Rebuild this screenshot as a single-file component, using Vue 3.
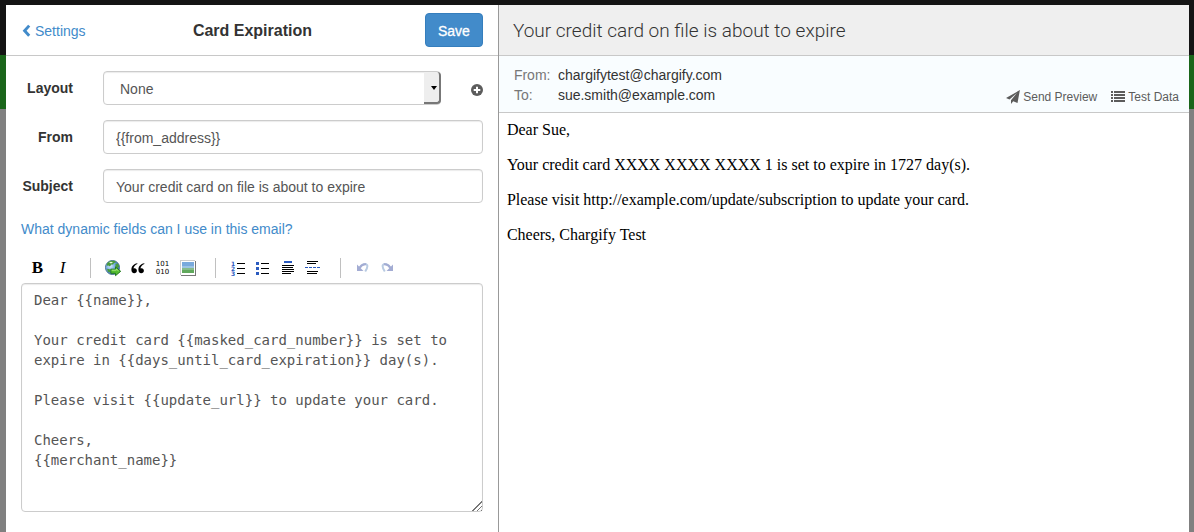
<script setup>
import { ref } from 'vue'

const layout = ref('None')
const fromAddress = ref('{{from_address}}')
const subject = ref('Your credit card on file is about to expire')
const body = ref(`Dear {{name}},

Your credit card {{masked_card_number}} is set to expire in {{days_until_card_expiration}} day(s).

Please visit {{update_url}} to update your card.

Cheers,
{{merchant_name}}`)

const paragraphs = [
  'Dear Sue,',
  'Your credit card XXXX XXXX XXXX 1 is set to expire in 1727 day(s).',
  'Please visit http://example.com/update/subscription to update your card.',
  'Cheers, Chargify Test',
]
</script>

<template>
  <div class="page">
    <div class="backdrop">
      <div class="band-dark"></div>
      <div class="band-green"></div>
    </div>

    <main class="dialog">
      <section class="editor">
        <header class="editor-head">
          <a href="#" class="back">
            <svg width="9" height="14" viewBox="0 0 9 14" aria-hidden="true">
              <path d="M7.200 1.600 2.600 6.700l4.600 5.100" fill="none" stroke="currentColor" stroke-width="2.900" />
            </svg>
            <span>Settings</span>
          </a>
          <h1>Card Expiration</h1>
          <button type="button" class="save">Save</button>
        </header>

        <form class="form" @submit.prevent>
          <div class="row">
            <label for="layout">Layout</label>
            <div class="layout-field">
              <div class="select-wrap">
                <select id="layout" v-model="layout" class="field">
                  <option>None</option>
                </select>
              </div>
              <button type="button" class="add" aria-label="Add layout">
                <svg width="12" height="12" viewBox="0 0 12 12">
                  <circle cx="6" cy="6" r="6" fill="#5c5c5c" />
                  <path d="M6 2.700v6.600M2.700 6h6.600" stroke="#fff" stroke-width="2" />
                </svg>
              </button>
            </div>
          </div>
          <div class="row">
            <label for="from">From</label>
            <input id="from" v-model="fromAddress" type="text" class="field" />
          </div>
          <div class="row">
            <label for="subject">Subject</label>
            <input id="subject" v-model="subject" type="text" class="field" />
          </div>

          <a href="#" class="help">What dynamic fields can I use in this email?</a>

          <div class="toolbar" role="toolbar" aria-label="Formatting">
            <button type="button" class="tool bold">B</button>
            <button type="button" class="tool italic">I</button>
            <span class="sep"></span>
            <button type="button" class="tool" aria-label="Link">
              <svg width="18" height="18" viewBox="0 0 18 18">
                <defs>
                  <radialGradient id="sea" cx="0.35" cy="0.4" r="0.7">
                    <stop offset="0" stop-color="#d6ebfc" />
                    <stop offset="0.5" stop-color="#6ba4de" />
                    <stop offset="1" stop-color="#2b5fae" />
                  </radialGradient>
                </defs>
                <circle cx="8.500" cy="8.500" r="7" fill="url(#sea)" stroke="#4b7693" stroke-width="1" />
                <path d="M4 3.500 7 1.800l4 .2 1 1.600-2 .3-.8 1.500-2 .2L6 7.400 4.500 6.500 3 6.700 2.800 5zM11.500 5l2.500-.5 1.200 3-1.500 1.500-2.200-1zM3 9.800l2.700.5.8 1.500-1 1.800-1.700-1z" fill="#499b3a" />
                <path d="m5 3.500 2-.8 2 .5-2 1.300z" fill="#e8f6df" />
                <path d="M6.800 10.200h4.700V7.900l5.200 4.400-5.200 4.400v-2.400H6.800z" fill="#55bd30" stroke="#237a20" stroke-width="1" />
                <path d="M7.700 11.200h4.600V10l2.300 2" fill="none" stroke="#a7e67b" />
              </svg>
            </button>
            <button type="button" class="tool" aria-label="Blockquote">
              <svg width="14" height="11" viewBox="0 0 14 11">
                <path d="M6.300.3C2.700 1 .4 3.300.4 6.700c0 2.200 1.100 3.500 2.800 3.500 1.600 0 2.700-1 2.700-2.500S4.900 5.200 3.500 5.200c-.4 0-.7.1-1 .2.100-1.900 1.500-3.500 3.900-4.500z" />
                <path d="M13.300.3C9.700 1 7.400 3.300 7.400 6.700c0 2.200 1.100 3.500 2.800 3.500 1.600 0 2.700-1 2.700-2.500s-1-2.500-2.400-2.500c-.4 0-.7.1-1 .2.100-1.900 1.500-3.500 3.900-4.500z" />
              </svg>
            </button>
            <button type="button" class="tool code">101<br />010</button>
            <button type="button" class="tool" aria-label="Image">
              <svg width="16" height="16" viewBox="0 0 16 16" shape-rendering="crispEdges">
                <path d="M1 15.500h14.500V1" fill="none" stroke="#777" />
                <path d="M.5 15V.5H15" fill="none" stroke="#ccc" />
                <path d="M1 1h14v14H1z" fill="#fff" />
                <path d="M2 2h12v7H2z" fill="#79a9dc" />
                <path d="M2 6h12v2H2z" fill="#9bc3e3" />
                <path d="M2 8h12v5H2z" fill="#60a85c" />
                <path d="M2 8h12v2H2z" fill="#86bb8a" />
              </svg>
            </button>
            <span class="sep"></span>
            <button type="button" class="tool" aria-label="Numbered list">
              <svg width="14" height="15" viewBox="0 0 14 15">
                <g class="digits">
                  <text x="0" y="5">1</text>
                  <text x="0" y="10">2</text>
                  <text x="0" y="15">3</text>
                </g>
                <path d="M6 2.500h8M6 7.500h8M6 12.500h8" stroke="#000" />
              </svg>
            </button>
            <button type="button" class="tool" aria-label="Bulleted list">
              <svg width="14" height="15" viewBox="0 0 14 15">
                <path d="M0 1h3v3H0zM0 6h3v3H0zM0 11h3v3H0z" fill="#2b5bbf" />
                <path d="M5 2.500h8M5 7.500h8M5 12.500h8" stroke="#000" />
              </svg>
            </button>
            <button type="button" class="tool" aria-label="Heading">
              <svg width="12" height="15" viewBox="0 0 12 15">
                <path d="M2 1h8" stroke="#2b5bbf" stroke-width="2" />
                <path d="M0 4.500h12M0 6.500h11M0 8.500h12M0 10.500h12M0 12.500h9" stroke="#000" />
              </svg>
            </button>
            <button type="button" class="tool" aria-label="Horizontal rule">
              <svg width="16" height="15" viewBox="0 0 16 15">
                <path d="M2 .5h11M2 2.500h9M2 10.500h11M2 12.500h10" stroke="#000" />
                <path d="M0 6.500h16" stroke="#2b5bbf" stroke-dasharray="3 1" />
              </svg>
            </button>
            <span class="sep"></span>
            <button type="button" class="tool" aria-label="Undo" disabled>
              <svg width="13" height="12" viewBox="0 0 13 12">
                <path d="M3.500 6C5.500 2 10 .8 11.200 3.200c.7 1.800-.5 4-2 6.300" fill="none" stroke="#b9cbe2" stroke-width="2" />
                <path d="M3.500 6C5.500 3 8 2 10 2.300" fill="none" stroke="#a3acd3" stroke-width="2" />
                <path d="M1 2.500v6.500h6.500z" fill="#a3acd3" />
              </svg>
            </button>
            <button type="button" class="tool" aria-label="Redo" disabled>
              <svg width="13" height="12" viewBox="0 0 13 12">
                <path d="M9.500 6C7.500 2 3 .8 1.800 3.200c-.7 1.800.5 4 2 6.300" fill="none" stroke="#b9cbe2" stroke-width="2" />
                <path d="M9.500 6C7.500 3 5 2 3 2.300" fill="none" stroke="#a3acd3" stroke-width="2" />
                <path d="M12 2.500v6.500H5.500z" fill="#a3acd3" />
              </svg>
            </button>
          </div>

          <textarea v-model="body" class="field body" rows="10" aria-label="Email body" spellcheck="false"></textarea>
        </form>
      </section>

      <section class="preview">
        <h2>{{ subject }}</h2>
        <div class="meta">
          <dl>
            <dt>From:</dt>
            <dd>chargifytest@chargify.com</dd>
            <dt>To:</dt>
            <dd>sue.smith@example.com</dd>
          </dl>
          <div class="actions">
            <a href="#">
              <svg width="14" height="14" viewBox="0 0 14 14" aria-hidden="true">
                <path d="M13.900.1 0 8.100l3.500 1.400 7.400-6.600L5 10.300V14l2.200-2.700 4.300 1.700z" fill="currentColor" />
              </svg>
              <span>Send Preview</span>
            </a>
            <a href="#">
              <svg width="14" height="14" viewBox="0 0 14 14" aria-hidden="true">
                <path d="M0 2h2M3 2h11M0 5h2M3 5h11M0 8h2M3 8h11M0 11h2M3 11h11" stroke="currentColor" stroke-width="2" />
              </svg>
              <span>Test Data</span>
            </a>
          </div>
        </div>
        <article class="message">
          <p v-for="text in paragraphs" :key="text">{{ text }}</p>
        </article>
      </section>
    </main>
  </div>
</template>

<style>
body {
  margin: 0;
  background: #808080;
}
</style>

<style scoped>
* {
  box-sizing: border-box;
}
.page {
  position: relative;
  display: flex;
  min-height: 100vh;
  padding: 5px 5px 0 6px;
  font: 14px/20px "Liberation Sans", Arial, sans-serif;
  color: #333;
}
.backdrop {
  position: absolute;
  inset: 0;
  background: #808080;
}
.band-dark {
  height: 55px;
  background: #141414;
}
.band-green {
  height: 54px;
  background: #1a651a;
}
.dialog {
  position: relative;
  flex: 1;
  display: grid;
  grid-template-columns: minmax(0, 5fr) minmax(0, 7fr);
  background: #fff;
}
.editor {
  border-right: 1px solid #999;
}
a {
  color: #428bca;
  text-decoration: none;
}
button {
  font: inherit;
  cursor: pointer;
}
.editor-head {
  display: grid;
  grid-template-columns: 1fr auto 1fr;
  align-items: center;
  height: 51px;
  padding: 0 15px 0 16px;
  border-bottom: 1px solid #c8c8c8;
}
.back {
  display: flex;
  align-items: center;
  gap: 4px;
  padding-top: 2px;
}
h1 {
  margin: 0;
  padding-top: 2px;
  font-size: 16px;
  line-height: 20px;
}
.save {
  justify-self: end;
  height: 34px;
  padding: 2px 12px 0;
  border: 1px solid #357ebd;
  border-radius: 4px;
  background: #428bca;
  color: #fff;
  -webkit-text-stroke: 0.3px #fff;
}
.form {
  padding: 15px 15px 20px;
}
.row {
  display: grid;
  grid-template-columns: 52px 1fr;
  column-gap: 30px;
  margin-bottom: 15px;
}
.row label {
  padding-top: 7px;
  text-align: right;
  font-weight: bold;
}
.field {
  display: block;
  width: 100%;
  height: 34px;
  margin: 0;
  padding: 2px 12px 0;
  border: 1px solid #ccc;
  border-radius: 4px;
  background: #fff;
  box-shadow: inset 0 1px 1px rgba(0, 0, 0, 0.08);
  color: #555;
  font: inherit;
}
.layout-field {
  display: flex;
  align-items: center;
  justify-content: space-between;
}
.select-wrap {
  position: relative;
  width: 89%;
}
.select-wrap .field {
  appearance: none;
  padding: 2px 16px 0;
}
.select-wrap::before {
  content: "";
  position: absolute;
  top: 1px;
  right: 0;
  bottom: 1px;
  width: 15px;
  border: solid #777;
  border-width: 0 2px 2px 0;
  border-radius: 0 4px 4px 0;
  background: #eee;
  pointer-events: none;
}
.select-wrap::after {
  content: "";
  position: absolute;
  top: 15px;
  right: 4px;
  border: 3px solid transparent;
  border-top: 4px solid #000;
  border-bottom: 0;
  pointer-events: none;
}
.add {
  display: flex;
  padding: 4px 0 0;
  border: 0;
  background: none;
}
.help {
  display: block;
  margin-top: 16px;
}
.toolbar {
  display: flex;
  height: 30px;
  margin: 14px 4px 0;
}
.tool {
  display: flex;
  align-items: center;
  justify-content: center;
  width: 25px;
  height: 30px;
  padding: 0;
  border: 0;
  background: none;
  color: #000;
}
.bold,
.italic {
  font: bold 17px/20px "Liberation Serif", "Times New Roman", serif;
}
.italic {
  font-style: italic;
  font-weight: normal;
}
.code {
  font: 7px/8px "DejaVu Sans", sans-serif;
}
.digits {
  font: bold 6px "DejaVu Sans", sans-serif;
  fill: #2b5bbf;
}
.sep {
  width: 25px;
  height: 20px;
  margin: 5px 0;
  background: linear-gradient(#c0c0c0, #c0c0c0) 15px 0 / 1px 100% no-repeat;
}
.body {
  height: auto;
  min-height: 229px;
  padding: 6px 12px;
  font: 14px/20px "DejaVu Sans Mono", monospace;
  resize: vertical;
}
.body::-webkit-resizer {
  background:
    linear-gradient(135deg, #fff 54%, transparent 54%),
    repeating-linear-gradient(135deg, transparent 0 2px, #777 2px 3px);
}
h2 {
  height: 51px;
  margin: 0;
  padding: 0 14px;
  border-bottom: 1px solid #c8c8c8;
  background: #efefef;
  font: 300 19px/52px Roboto, "Liberation Sans", sans-serif;
}
.meta {
  display: flex;
  justify-content: space-between;
  align-items: flex-end;
  padding: 9px 10px 5px 15px;
  border-bottom: 1px solid #c8c8c8;
  background: #f9fdff;
}
dl {
  display: grid;
  grid-template-columns: 44px auto;
  margin: 0 0 2px;
}
dt {
  color: #777;
}
dd {
  margin: 0;
}
.actions {
  display: flex;
  gap: 14px;
  font-size: 12px;
}
.actions a {
  display: flex;
  align-items: center;
  gap: 3px;
  color: #5c5c5c;
}
.message {
  padding: 7px 8px;
  color: #000;
  font: 16px/19px "Liberation Serif", "Times New Roman", serif;
}
.message p {
  margin: 0 0 16px;
}
</style>
